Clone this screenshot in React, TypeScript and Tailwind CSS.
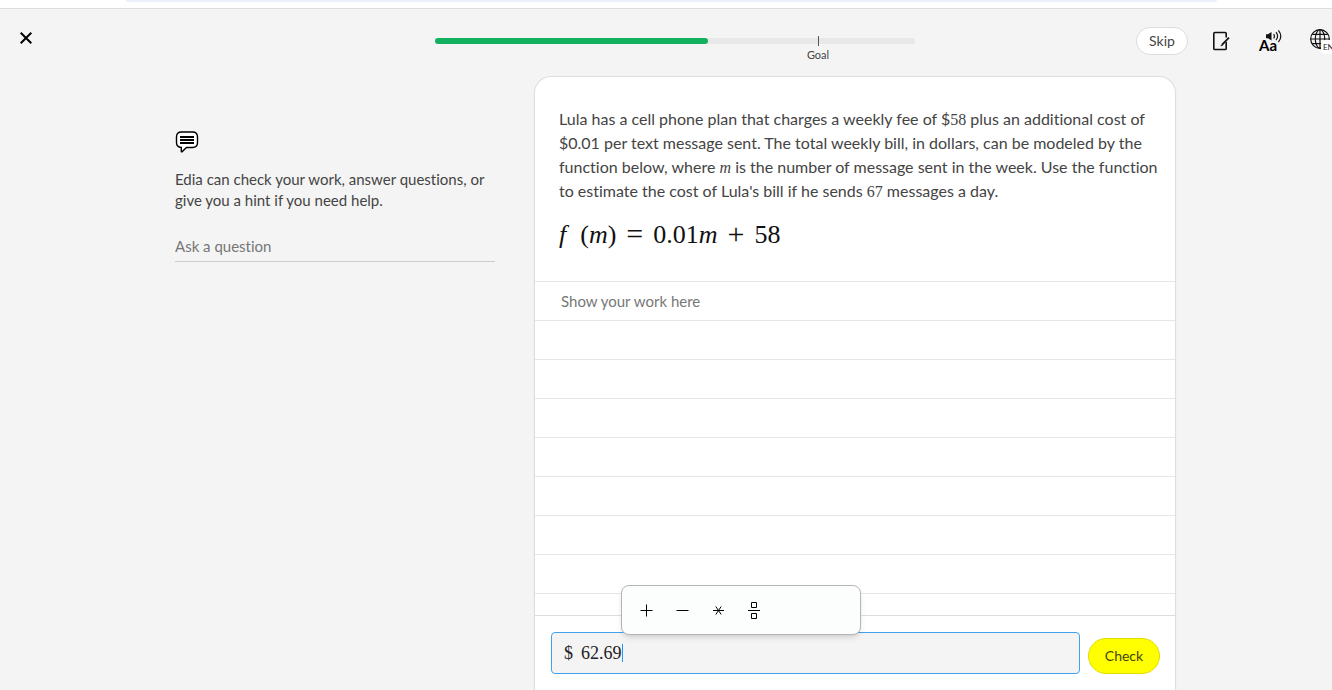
import React, { useState } from 'react';

const GOAL_PERCENT = 79.8;

const operators = [
  { label: 'Plus', icon: <path d="M0.5 6.5h12M6.5 0.5v12" /> },
  { label: 'Minus', icon: <path d="M0.5 6.5h12" /> },
  { label: 'Times', icon: <path d="M1 6.5h11M3.8 2.5l5.4 8M9.2 2.5l-5.4 8" /> },
];

function ProgressBar({ percent }: { percent: number }) {
  return (
    <div className="relative h-1.5 rounded-full bg-[#e8e8e8]">
      <div className="h-1.5 rounded-full bg-[#12b05f]" style={{ width: `${percent}%` }} />
      <div
        className="absolute -top-0.5 flex w-10 -translate-x-1/2 flex-col items-center"
        style={{ left: `${GOAL_PERCENT}%` }}
      >
        <span className="h-2.5 w-px bg-[#555555]" />
        <span className="text-[11px] leading-[18px] text-[#444444]">Goal</span>
      </div>
    </div>
  );
}

function Header() {
  return (
    <header className="grid h-[67px] shrink-0 grid-cols-[1fr_480px_1fr] items-start">
      <div className="pt-[19px] pl-4">
        <button type="button" aria-label="Close" className="flex size-5 items-center justify-center">
          <svg width="12" height="12" viewBox="0 0 12 12" fill="none" stroke="#000" strokeWidth="2">
            <path d="M0.7 0.7l10.6 10.6M11.3 0.7L0.7 11.3" />
          </svg>
        </button>
      </div>

      <div className="pt-[29px]">
        <ProgressBar percent={56.8} />
      </div>

      <div className="flex items-start justify-end pt-[18px] pr-3">
        <button
          type="button"
          className="h-7 w-[52px] rounded-full border border-[#dcdcdc] bg-white pb-0.5 text-[14px] text-[#444444]"
        >
          Skip
        </button>
        <button type="button" aria-label="Scratchpad" className="ml-6 flex h-7 w-[18px] items-center">
          <svg width="18" height="20" viewBox="0 0 18 20" fill="none" stroke="#111">
            <path
              d="M14.2 6.5V2.6C14.2 1.8 13.9 1.5 13.1 1.5H2.9C2.1 1.5 1.8 1.8 1.8 2.6V17.4C1.8 18.2 2.1 18.5 2.9 18.5H13.1C13.9 18.5 14.2 18.2 14.2 17.4V11"
              strokeWidth="1.6"
            />
            <path d="M17 6.7L10.4 13.4" strokeWidth="1.8" />
            <path d="M10.2 12.8L8.8 15L11 14.2z" fill="#111" strokeWidth="0.5" />
          </svg>
        </button>
        <button type="button" className="relative ml-7 h-7 w-6 pl-px text-left">
          <span className="block pt-2 text-[15px] leading-[18px] font-bold text-black">Aa</span>
          <svg
            className="absolute top-0.5 left-2"
            width="17"
            height="15"
            viewBox="0 0 17 15"
            fill="none"
            stroke="#111"
            strokeWidth="1.2"
          >
            <path d="M0 5.3h2L5.5 3v8.6L2 9.3H0z" fill="#111" stroke="none" />
            <path d="M7.6 5q1.7 2.2 0 4.4M10 3.2q3.2 4 0 8M12.4 1.3q4.8 5.9 0 11.8" />
          </svg>
        </button>
        <button type="button" className="relative ml-7 flex h-7 w-7 items-start pt-0.5">
          <svg width="20" height="20" viewBox="0 0 20 20" fill="none" stroke="#111" strokeWidth="1.2">
            <circle cx="10" cy="10" r="9.3" />
            <ellipse cx="10" cy="10" rx="4.7" ry="9.3" />
            <path d="M10 0.7v18.6M0.7 10h18.6M2.3 5.3h15.4M2.3 14.7h15.4" />
          </svg>
          <span className="absolute top-[13px] left-[11px] rounded bg-white px-0.5 text-[8px] leading-[14px] text-[#222222]">
            EN
          </span>
        </button>
      </div>
    </header>
  );
}

function HelpPanel() {
  return (
    <aside className="w-80 shrink-0 pt-[53px]">
      <svg width="24" height="24" viewBox="0 0 24 24" fill="none" stroke="#000">
        <path
          d="M6.5 2H17.5Q22.5 2 22.5 7V12.5Q22.5 17.5 17.5 17.5H11.5L7 21.8Q6.3 22 6.3 21V17.5Q1.5 17 1.5 12.5V7Q1.5 2 6.5 2z"
          fill="#fff"
          strokeWidth="1.4"
        />
        <path d="M5 7h14M5 10h14M5 13h14" strokeWidth="2" />
      </svg>
      <p className="mt-[15px] text-[15px] leading-[21px] text-[#444444]">
        Edia can check your work, answer questions, or
        <br />
        give you a hint if you need help.
      </p>
      <input
        type="text"
        aria-label="Ask a question"
        placeholder="Ask a question"
        className="mt-5 h-[31px] w-full border-b border-[#cccccc] bg-transparent text-[15px] outline-none placeholder:text-[#777777]"
      />
    </aside>
  );
}

function Num({ children }: { children: React.ReactNode }) {
  return <span className="font-['Liberation_Serif',serif] leading-none">{children}</span>;
}

function Question() {
  return (
    <section className="pt-[30px] pr-3 pb-[27px] pl-6">
      <p className="text-base leading-6 text-[#444444]">
        Lula has a cell phone plan that charges a weekly fee of $<Num>58</Num> plus an additional cost of
        <br />
        $0.01 per text message sent. The total weekly bill, in dollars, can be modeled by the
        <br />
        function below, where <Num><i>m</i></Num> is the number of message sent in the week. Use the function
        <br />
        to estimate the cost of Lula's bill if he sends <Num>67</Num> messages a day.
      </p>
      <div className="mt-[11px] flex h-10 items-center gap-2.5 font-['Liberation_Serif',serif] text-[26px] text-[#111111]">
        <span className="flex gap-3.5">
          <i>f</i>
          <span>
            (<i>m</i>)
          </span>
        </span>
        <span className="text-3xl">=</span>
        <span>
          0.01<i>m</i>
        </span>
        <span className="text-3xl">+</span>
        <span>58</span>
      </div>
    </section>
  );
}

function MathToolbar() {
  return (
    <div className="absolute bottom-[38px] left-[69px] flex h-[50px] w-60 items-center gap-4 rounded-lg border border-[#b5b5b5] bg-[#fcfdfd] px-[14px] shadow-md">
      {operators.map((op) => (
        <button key={op.label} type="button" aria-label={op.label} className="flex size-5 items-center justify-center">
          <svg width="13" height="13" viewBox="0 0 13 13" fill="none" stroke="#000" strokeWidth="1">
            {op.icon}
          </svg>
        </button>
      ))}
      <button type="button" aria-label="Fraction" className="flex size-5 items-center justify-center">
        <svg width="12" height="18" viewBox="0 0 12 18" fill="none" stroke="#000" strokeWidth="1">
          <path d="M0 9.5h12M3.5 1.5h5v5h-5zM3.5 12.5h5v5h-5z" />
        </svg>
      </button>
    </div>
  );
}

function AnswerBar() {
  const [answer, setAnswer] = useState('62.69');

  return (
    <form
      onSubmit={(e) => e.preventDefault()}
      className="flex shrink-0 items-end gap-2 border-t border-[#dddddd] py-4 pr-[15px] pl-4"
    >
      <div className="relative flex h-[42px] flex-1 items-center rounded border border-[#42a1ec] bg-[#f4f4f4] pl-3 font-['Liberation_Serif',serif] text-lg text-[#222222]">
        <label htmlFor="answer" className="pr-2">
          $
        </label>
        <input
          id="answer"
          type="text"
          value={answer}
          onChange={(e) => setAnswer(e.target.value)}
          className="field-sizing-content bg-transparent outline-none"
        />
        <span className="h-[18px] w-px bg-[#2196f3]" />
        <MathToolbar />
      </div>
      <button
        type="submit"
        className="h-9 w-[72px] rounded-full border border-[#dddd00] bg-[#ffff00] pb-0.5 text-[14px] text-[#444411]"
      >
        Check
      </button>
    </form>
  );
}

export default function App() {
  return (
    <div className="h-screen overflow-hidden bg-[#f4f4f4] font-['Lato',sans-serif] [font-variant-ligatures:none]">
      {/* the page runs slightly past the right edge of the window */}
      <div className="-mr-[18px] flex h-full flex-col">
        <div className="h-[9px] shrink-0 border-b border-[#dddddd] bg-white pr-[133px] pl-[126px]">
          <div className="h-0.5 rounded-b-lg bg-[#ebf0fb]" />
        </div>
        <Header />
        <main className="mx-auto flex min-h-0 w-full max-w-[1000px] flex-1 gap-10 pt-px">
          <HelpPanel />
          <div className="flex min-w-0 flex-1 flex-col rounded-t-2xl bg-white shadow-sm ring-1 ring-[#dedede]">
            <Question />
            <textarea
              aria-label="Show your work here"
              placeholder="Show your work here"
              className="block min-h-0 w-full flex-1 resize-none overflow-hidden border-t border-[#e6e6e6] bg-[repeating-linear-gradient(#fff_0_38px,#e6e6e6_38px_39px)] px-[26px] text-[15px] leading-[38px] outline-none placeholder:text-[#777777]"
            />
            <AnswerBar />
          </div>
        </main>
      </div>
    </div>
  );
}
